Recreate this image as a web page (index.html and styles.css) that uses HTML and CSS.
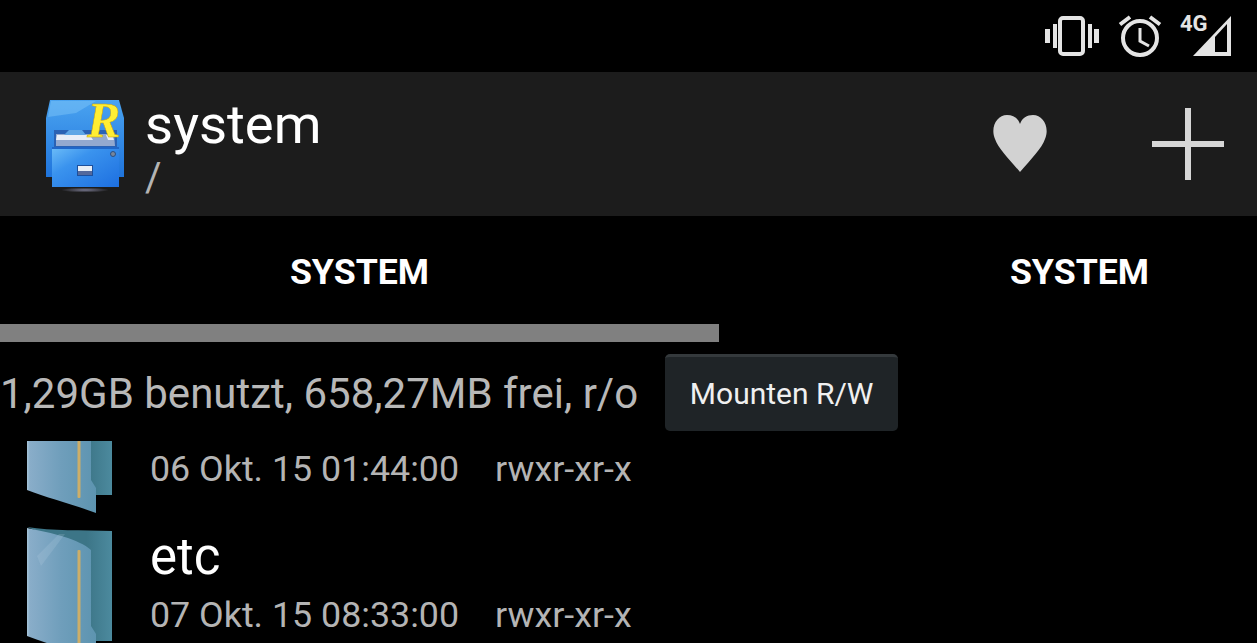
FILE: index.html
```html
<!DOCTYPE html>
<html lang="de">
<head>
<meta charset="utf-8">
<title>Root Explorer</title>
<link rel="stylesheet" href="styles.css">
</head>
<body>
<div class="screen">
  <header class="status">
    <svg class="st-vibrate" viewBox="0 0 54 42" width="54" height="42">
      <rect x="0" y="14" width="5" height="14" fill="#e4e4e4"/>
      <rect x="8" y="9" width="4" height="24" fill="#e4e4e4"/>
      <rect x="15" y="3" width="23" height="36" rx="3" fill="none" stroke="#e4e4e4" stroke-width="4"/>
      <rect x="43" y="9" width="4" height="24" fill="#e4e4e4"/>
      <rect x="49" y="14" width="5" height="14" fill="#e4e4e4"/>
    </svg>
    <svg class="st-alarm" viewBox="0 0 44 44" width="44" height="44">
      <circle cx="22" cy="24" r="17" fill="none" stroke="#e4e4e4" stroke-width="4"/>
      <path d="M22 14V27L31 32" fill="none" stroke="#e4e4e4" stroke-width="3"/>
      <path d="M2 10.500L12 3M42 10.500L32 3" fill="none" stroke="#e4e4e4" stroke-width="4"/>
    </svg>
    <div class="st-signal">
      <span class="st-net">4G</span>
      <svg viewBox="0 0 38 40" width="38" height="40">
        <path d="M0 40L38 0V40Z" fill="#e4e4e4"/>
        <path d="M22 21L34 8V36H22Z" fill="#000"/>
      </svg>
    </div>
  </header>

  <section class="toolbar">
    <svg class="logo" viewBox="0 0 78 92" width="78" height="92">
      <defs>
        <linearGradient id="cab" x1="0" y1="0" x2="0" y2="1"><stop offset="0" stop-color="#4aa3f0"/><stop offset="1" stop-color="#1f74dc"/></linearGradient>
        <linearGradient id="front" x1="0" y1="0" x2="1" y2="1"><stop offset="0" stop-color="#6dbdf8"/><stop offset=".35" stop-color="#3a93ee"/><stop offset="1" stop-color="#1d6fe0"/></linearGradient>
        <radialGradient id="shade"><stop offset="0" stop-color="#77778e"/><stop offset="1" stop-color="#1c1c1c"/></radialGradient>
      </defs>
      <ellipse cx="39" cy="90" rx="24" ry="2.500" fill="url(#shade)"/>
      <path d="M4 0H73L78 18V77H0V18Z" fill="url(#cab)"/>
      <path d="M5 1H50L30 13L2 17Z" fill="#7cc4f8" opacity=".5"/>
      <rect x="8" y="30" width="63" height="17" fill="#2a62b4"/>
      <path d="M10 34H68L69 46H10Z" fill="#93a9cf"/>
      <path d="M11 35H44L47 40H10Z" fill="#e8eef8"/>
      <path d="M60 35H66L68 40H62Z" fill="#e8eef8"/>
      <path d="M18 35L23 30H36L40 35Z" fill="#5ea6e6"/>
      <rect x="6" y="47" width="67" height="40" fill="url(#front)"/>
      <rect x="6" y="47" width="67" height="2" fill="#2067c8"/>
      <rect x="31" y="65" width="16" height="11" fill="#1c4f9c"/>
      <rect x="32" y="66" width="14" height="5" fill="#e8eef6"/>
      <rect x="32" y="71" width="14" height="4" fill="#54699c"/>
      <circle cx="67" cy="54" r="2.500" fill="#77869b" stroke="#2c4f80"/>
      <text class="logo-r" x="41" y="37">R</text>
    </svg>
    <div class="path">
      <div class="path-name">system</div>
      <div class="path-dir">/</div>
    </div>
    <svg class="heart" viewBox="0 0 54 57" width="54" height="57">
      <path d="M27 57C16 44 5 33 2 24C-3 12 4 0 14 0C20 0 25 3 27 9C29 3 34 0 40 0C50 0 57 12 52 24C49 33 38 44 27 57Z" fill="#d2d2d2"/>
    </svg>
    <svg class="plus" viewBox="0 0 72 72" width="72" height="72">
      <path d="M36 0V72M0 36H72" stroke="#d6d6d6" stroke-width="6" fill="none"/>
    </svg>
  </section>

  <nav class="tabs">
    <div class="tab">SYSTEM</div>
    <div class="tab">SYSTEM</div>
  </nav>
  <div class="indicator"></div>

  <section class="storage">
    <span class="storage-text">1,29GB benutzt, 658,27MB frei, r/o</span>
    <button class="mount">Mounten R/W</button>
  </section>

  <section class="list">
    <div class="list-inner">
      <div class="row">
        <svg class="folder" viewBox="0 0 85 134" width="85" height="134"><use href="#folder-art"/></svg>
        <div class="row-text">
          <div class="row-name"></div>
          <div class="row-meta"><span class="row-date">06 Okt. 15 01:44:00</span><span>rwxr-xr-x</span></div>
        </div>
      </div>
      <div class="row">
        <svg class="folder" viewBox="0 0 85 134" width="85" height="134">
          <defs>
            <linearGradient id="fold" x1="0" y1="0" x2="1" y2="0"><stop offset="0" stop-color="#a8c6da"/><stop offset=".04" stop-color="#89adc9"/><stop offset=".5" stop-color="#6f9ebb"/><stop offset="1" stop-color="#5d94b0"/></linearGradient>
            <linearGradient id="back" x1="0" y1="0" x2="1" y2="0"><stop offset=".7" stop-color="#3c7587"/><stop offset="1" stop-color="#4c8a9e"/></linearGradient>
            <g id="folder-art">
              <path d="M0 1C25 5 55 4 85 5V115H64V26Z" fill="url(#back)"/>
              <path d="M0 2C25 7 52 13 64 24V100L69 108V133C45 124 20 118 0 110Z" fill="url(#fold)"/>
              <path d="M10 30L32 8H38L14 40Z" fill="#c4d8e8" opacity=".18"/>
              <rect x="50.500" y="24" width="3" height="94" rx="1" fill="#cdae68"/>
            </g>
          </defs>
          <use href="#folder-art"/>
        </svg>
        <div class="row-text">
          <div class="row-name">etc</div>
          <div class="row-meta"><span class="row-date">07 Okt. 15 08:33:00</span><span>rwxr-xr-x</span></div>
        </div>
      </div>
    </div>
  </section>
</div>
</body>
</html>
```

FILE: styles.css
```css
* { box-sizing: border-box; }
html, body { margin: 0; padding: 0; background: #000; }
body { width: 1257px; height: 643px; overflow: hidden; font-family: Roboto, "Liberation Sans", sans-serif; }
.screen { width: 1257px; height: 643px; overflow: hidden; display: flex; flex-direction: column; }

.status { height: 72px; flex: none; display: flex; align-items: flex-start; }
.st-vibrate { margin: 15px 0 0 1045px; display: block; }
.st-alarm { margin: 14px 0 0 19px; display: block; }
.st-signal { margin: 16px 0 0 31px; display: flex; position: relative; }
.st-net { position: absolute; left: -13px; top: -3px; color: #e4e4e4; font: 700 22px/1 Roboto, sans-serif; }

.toolbar { height: 144px; flex: none; background: #1c1c1c; display: flex; align-items: flex-start; padding-left: 46px; }
.logo { display: block; flex: none; margin-top: 28px; overflow: visible; }
.path { margin-left: 21px; flex: 1; padding-top: 24px; }
.path-name { color: #fff; font-size: 54.500px; line-height: 56px; }
.path-dir { color: #b4b4b4; font-size: 40px; line-height: 42px; margin-top: 5px; }
.heart { flex: none; display: block; margin-top: 43px; overflow: visible; }
.plus { flex: none; display: block; margin: 36px 33px 0 105px; }

.tabs { height: 108px; flex: none; display: flex; overflow: hidden; }
.tab { flex: 0 0 719px; text-align: center; padding-top: 34px; color: #fff; font-weight: 700; font-size: 35.700px; line-height: 44px; margin-right: 1px; }
.indicator { width: 719px; height: 18px; flex: none; background: #808080; }

.storage { height: 99px; flex: none; display: flex; align-items: center; }
.storage-text { color: #b8b8b8; font-size: 42px; line-height: 44px; white-space: nowrap; margin-top: 4px; }
.mount { margin-left: 27px; width: 233px; height: 77px; margin-top: 1px; border: 0; border-top: 3px solid #34393c; border-radius: 5px; background: #1f2427; color: #f0f0f0; font: 400 30px Roboto, sans-serif; padding: 0; }

.list { flex: 1; min-height: 0; overflow: hidden; }
.list-inner { margin-top: -61px; }
.row { height: 146px; display: flex; padding-left: 27px; }
.folder { display: block; flex: none; }
.row-text { margin-left: 38px; }
.row-name { color: #fff; font-size: 51px; line-height: 56px; height: 56px; margin-top: 3px; }
.row-meta { color: #b4b4b4; font-size: 35.800px; line-height: 44px; margin-top: 8px; white-space: nowrap; }
.row-date { margin-right: 36px; }
.logo-r { font: italic 700 50px "Liberation Serif", serif; fill: #ffee33; stroke: #c9a210; stroke-width: .5; }
```
